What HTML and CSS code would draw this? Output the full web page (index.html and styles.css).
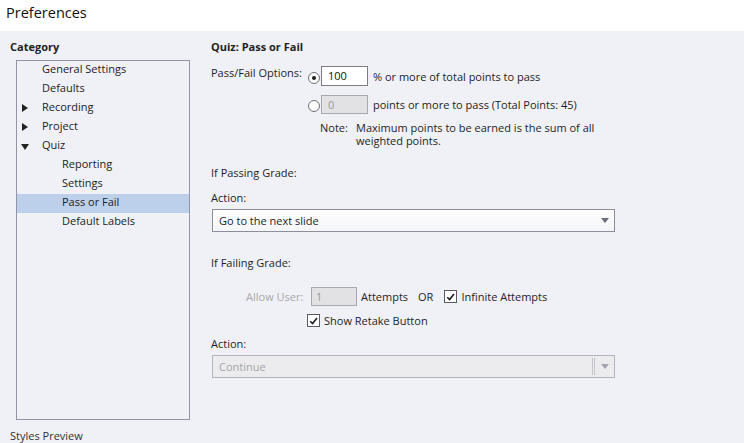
FILE: index.html
```html
<!DOCTYPE html>
<html>
<head>
<meta charset="utf-8">
<link rel="stylesheet" href="styles.css">
</head>
<body>
<div class="header">Preferences</div>
<div class="main">
  <div class="sidebar">
    <div class="cat-title">Category</div>
    <div class="tree">
      <div class="row l1">General Settings</div>
      <div class="row l1">Defaults</div>
      <div class="row l1"><span class="arrow right"></span>Recording</div>
      <div class="row l1"><span class="arrow right"></span>Project</div>
      <div class="row l1"><span class="arrow down"></span>Quiz</div>
      <div class="row l2">Reporting</div>
      <div class="row l2">Settings</div>
      <div class="row l2 selected">Pass or Fail</div>
      <div class="row l2">Default Labels</div>
    </div>
    <div class="preview">Styles Preview</div>
  </div>
  <div class="panel">
    <div class="panel-title">Quiz: Pass or Fail</div>
    <div class="opt-row first">
      <div class="opt-label">Pass/Fail Options:</div>
      <span class="radio checked"></span>
      <div class="input">100</div>
      <span class="opt-text">% or more of total points to pass</span>
    </div>
    <div class="opt-row second">
      <div class="opt-label"></div>
      <span class="radio"></span>
      <div class="input disabled">0</div>
      <span class="opt-text">points or more to pass (Total Points: 45)</span>
    </div>
    <div class="note">
      <span class="note-label">Note:</span>
      <div class="note-text">
        <div class="note-line">Maximum points to be earned is the sum of all</div>
        <div class="note-line">weighted points.</div>
      </div>
    </div>
    <div class="section pass-grade">If Passing Grade:</div>
    <div class="section action">Action:</div>
    <div class="select"><span class="sel-text">Go to the next slide</span><span class="caret"></span></div>
    <div class="section fail-grade">If Failing Grade:</div>
    <div class="allow-row">
      <span class="allow-label">Allow User:</span>
      <div class="input disabled small">1</div>
      <span class="attempts">Attempts</span>
      <span class="or">OR</span>
      <span class="check"><svg viewBox="0 0 12 12" width="12" height="12"><path d="M2.5 6.2 L5 8.8 L9.8 2.8" fill="none" stroke="#1a1a1a" stroke-width="1.7"/></svg></span>
      <span class="check-text">Infinite Attempts</span>
    </div>
    <div class="retake-row">
      <span class="check"><svg viewBox="0 0 12 12" width="12" height="12"><path d="M2.5 6.2 L5 8.8 L9.8 2.8" fill="none" stroke="#1a1a1a" stroke-width="1.7"/></svg></span>
      <span class="check-text">Show Retake Button</span>
    </div>
    <div class="section action2">Action:</div>
    <div class="select disabled"><span class="sel-text">Continue</span><span class="sep"></span><span class="caret"></span></div>
  </div>
</div>
</body>
</html>
```
FILE: styles.css
```css
* { box-sizing: border-box; }
html, body { margin: 0; padding: 0; }
body {
  width: 744px;
  height: 443px;
  overflow: hidden;
  font-family: "Open Sans", "Noto Sans", sans-serif;
  font-size: 11px;
  color: #1e1e1e;
  background: #f0f1f7;
}
.header {
  height: 31px;
  background: #ffffff;
  font-size: 14.5px;
  padding: 3px 0 0 6px;
  line-height: 20px;
  color: #111;
}
.main {
  display: flex;
  height: 412px;
}
.sidebar {
  width: 211px;
  padding: 8px 0 0 10px;
  display: flex;
  flex-direction: column;
}
.cat-title {
  font-weight: bold;
  line-height: 15px;
  height: 15px;
  color: #222;
}
.tree {
  margin: 6px 0 0 6px;
  width: 174px;
  height: 365px;
  border: 1px solid #9494a6;
}
.row {
  height: 19px;
  line-height: 16px;
  position: relative;
  color: #222;
}
.row.l1 { padding-left: 25px; }
.row.l2 { padding-left: 45px; }
.row.selected { background: #bcd0ec; }
.arrow {
  position: absolute;
  left: 5px;
  top: 5px;
  width: 0; height: 0;
}
.arrow.right {
  border-top: 4px solid transparent;
  border-bottom: 4px solid transparent;
  border-left: 6px solid #222;
}
.arrow.down {
  left: 4px;
  top: 7px;
  border-left: 4px solid transparent;
  border-right: 4px solid transparent;
  border-top: 6px solid #222;
}
.preview {
  margin-top: 8px;
  line-height: 15px;
  color: #333;
}
.panel {
  flex: 1;
  padding: 8px 0 0 0;
  display: flex;
  flex-direction: column;
  align-items: flex-start;
}
.panel-title {
  font-weight: bold;
  line-height: 15px;
  height: 15px;
  color: #222;
}
.opt-row {
  display: flex;
  align-items: center;
  height: 20px;
}
.opt-row.first { margin-top: 12px; }
.opt-row.second { margin-top: 8px; }
.opt-label {
  width: 97px;
  align-self: flex-start;
  line-height: 15px;
  margin-top: -1px;
}
.radio {
  width: 12px;
  height: 12px;
  border: 1px solid #6f6f78;
  border-radius: 50%;
  background: #fff;
  position: relative;
  margin-top: 4px;
}
.radio.checked::after {
  content: "";
  position: absolute;
  left: 3px; top: 3px;
  width: 4px; height: 4px;
  border-radius: 50%;
  background: #1a1a1a;
}
.input {
  margin-left: 1px;
  width: 47px;
  height: 20px;
  border: 1px solid #7c7c84;
  background: #fff;
  padding-left: 6px;
  line-height: 17px;
  color: #111;
}
.input.disabled {
  background: #e2e2e4;
  border-color: #a8a8b0;
  color: #9a9a9a;
  height: 19px;
}
.opt-text { margin-left: 5px; }
.note {
  margin: 7px 0 0 109px;
  display: flex;
}
.note-label { width: 36px; line-height: 13px; }
.note-line { height: 13px; line-height: 13px; }
.section { line-height: 15px; height: 15px; }
.pass-grade { margin-top: 18px; }
.action { margin-top: 10px; }
.select {
  margin-top: 4px;
  margin-left: 1px;
  width: 403px;
  height: 23px;
  border: 1px solid #8d8d9c;
  background: linear-gradient(#ffffff, #f4f5f8);
  display: flex;
  align-items: center;
  padding-left: 6px;
  position: relative;
}
.sel-text { flex: 1; }
.caret {
  width: 0; height: 0;
  border-left: 4px solid transparent;
  border-right: 4px solid transparent;
  border-top: 5px solid #6a6a78;
  margin-right: 5px;
}
.select.disabled {
  background: #ececef;
  border-color: #b4b4bf;
  color: #a4a4a4;
}
.select.disabled .caret { border-top-color: #a4a4b0; }
.sep {
  width: 3px;
  height: 17px;
  border-left: 1px solid #c4c4cc;
  border-right: 1px solid #c4c4cc;
  margin-right: 6px;
}
.fail-grade { margin-top: 23px; }
.allow-row {
  display: flex;
  align-items: center;
  height: 19px;
  margin-top: 17px;
  margin-left: 35px;
}
.allow-label { color: #a8a8a8; width: 65px; }
.input.small { width: 46px; margin-left: 0; padding-left: 4px; }
.attempts { margin-left: 4px; }
.or { margin-left: 10px; }
.check {
  width: 13px;
  height: 13px;
  border: 1px solid #5a5a62;
  background: #fff;
  display: flex;
  align-items: center;
  justify-content: center;
}
.allow-row .check { margin-left: 11px; }
.check-text { margin-left: 4px; }
.retake-row {
  display: flex;
  align-items: center;
  height: 15px;
  margin-top: 7px;
  margin-left: 96px;
}
.action2 { margin-top: 8px; }
```
